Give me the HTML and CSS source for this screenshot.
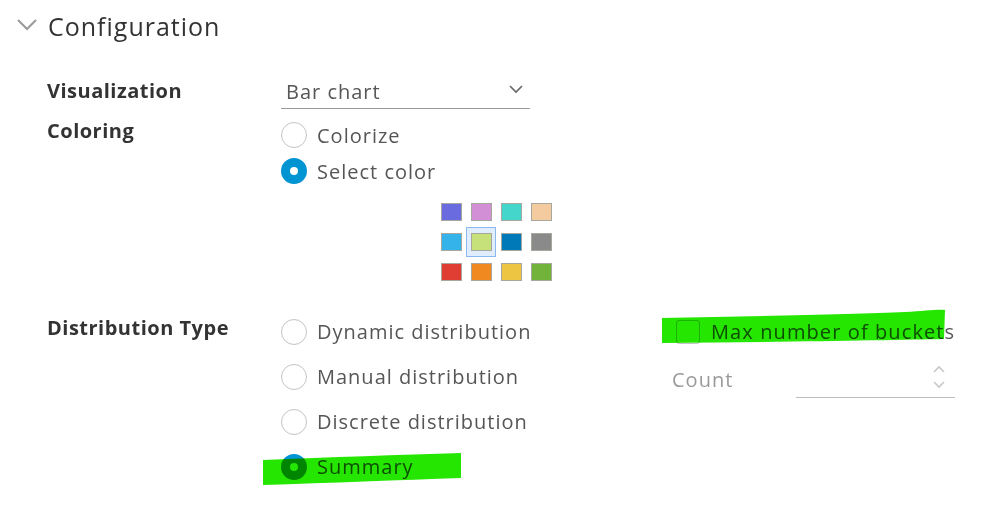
FILE: index.html
```html
<!DOCTYPE html>
<html lang="en">
<head>
    <meta charset="UTF-8">
    <title>Configuration</title>
    <link rel="stylesheet" href="styles.css">
</head>
<body>
    <div class="page">
        <div class="section-head">
            <svg class="caret" width="22" height="14" viewBox="0 0 22 14"><path d="M2 2 L11 11 L20 2" fill="none" stroke="#9a9a9a" stroke-width="2"/></svg>
            <h2>Configuration</h2>
        </div>

        <div class="form">
            <div class="row row-vis">
                <div class="label">Visualization</div>
                <div class="select">
                    <span>Bar chart</span>
                    <svg width="16" height="10" viewBox="0 0 16 10"><path d="M2 2 L8 8 L14 2" fill="none" stroke="#666" stroke-width="1.6"/></svg>
                </div>
            </div>

            <div class="row row-color">
                <div class="label">Coloring</div>
                <div class="control">
                    <div class="radio"><span class="dot"></span>Colorize</div>
                    <div class="radio"><span class="dot checked"></span>Select color</div>
                    <div class="swatches">
                        <div class="cell"><span class="sw" style="background:#6b6be0"></span></div>
                        <div class="cell"><span class="sw" style="background:#d38fd6"></span></div>
                        <div class="cell"><span class="sw" style="background:#45d6cb"></span></div>
                        <div class="cell"><span class="sw" style="background:#f3cb9e"></span></div>
                        <div class="cell"><span class="sw" style="background:#33b3ea"></span></div>
                        <div class="cell selected"><span class="sw" style="background:#c6e07a"></span></div>
                        <div class="cell"><span class="sw" style="background:#0079b8"></span></div>
                        <div class="cell"><span class="sw" style="background:#8a8a8a"></span></div>
                        <div class="cell"><span class="sw" style="background:#e03e33"></span></div>
                        <div class="cell"><span class="sw" style="background:#f08a20"></span></div>
                        <div class="cell"><span class="sw" style="background:#eec443"></span></div>
                        <div class="cell"><span class="sw" style="background:#72b33b"></span></div>
                    </div>
                </div>
            </div>

            <div class="row row-dist">
                <div class="label">Distribution Type</div>
                <div class="dist-options">
                    <div class="radio tall"><span class="dot"></span>Dynamic distribution</div>
                    <div class="radio tall"><span class="dot"></span>Manual distribution</div>
                    <div class="radio tall"><span class="dot"></span>Discrete distribution</div>
                    <div class="radio tall"><span class="dot checked"></span>Summary</div>
                </div>
                <div class="buckets">
                    <div class="check"><span class="box"></span>Max number of buckets</div>
                    <div class="count">
                        <span class="count-label">Count</span>
                        <div class="number">
                            <svg width="16" height="28" viewBox="0 0 16 28"><path d="M3 9 L8 4 L13 9 M3 19 L8 24 L13 19" fill="none" stroke="#c8c8c8" stroke-width="1.6"/></svg>
                        </div>
                    </div>
                </div>
            </div>
        </div>
    </div>

    <svg class="marker" width="981" height="507" viewBox="0 0 981 507">
        <path d="M662 318 C 760 316, 860 314, 905 312 C 925 311, 938 309, 945 310 L 944 339 C 900 340, 780 342, 662 343 Z" fill="#24e600"/>
        <path d="M263 460 C 330 457, 400 455, 461 453 L 461 478 C 400 480, 330 483, 263 485 Z" fill="#24e600"/>
    </svg>
</body>
</html>
```

FILE: styles.css
```css
body {
    margin: 0;
    font-family: "Open Sans", "Noto Sans", sans-serif;
    color: #565656;
    background: #fff;
}
.page {
    position: relative;
    padding-top: 1px;
}
.section-head {
    display: flex;
    align-items: center;
    height: 50px;
    padding-left: 16px;
}
.caret {
    margin-right: 10px;
    margin-top: -3px;
}
.section-head h2 {
    margin: 0;
    font-size: 25px;
    font-weight: 400;
    letter-spacing: 1px;
    color: #333;
}
.form {
    padding-left: 47px;
    margin-top: 23px;
}
.row {
    display: flex;
}
.label {
    width: 234px;
    flex: none;
    font-size: 20px;
    font-weight: 700;
    letter-spacing: 0.5px;
    color: #333;
}
.row-vis .label {
    line-height: 34px;
}
.select {
    width: 244px;
    height: 34px;
    padding-left: 5px;
    border-bottom: 1px solid #9a9a9a;
    display: flex;
    align-items: center;
    justify-content: space-between;
    font-size: 20px;
    letter-spacing: 1px;
    color: #565656;
}
.select svg {
    margin-right: 6px;
    margin-top: -4px;
}
.row-color {
    margin-top: 8px;
}
.row-color .label {
    padding-top: 2px;
    line-height: 24px;
}
.radio {
    display: flex;
    align-items: center;
    height: 36px;
    font-size: 20px;
    letter-spacing: 1px;
}
.radio.tall {
    height: 45px;
}
.dot {
    width: 24px;
    height: 24px;
    border: 1px solid #c4c4c4;
    border-radius: 50%;
    margin-right: 10px;
    box-sizing: content-box;
    flex: none;
}
.dot.checked {
    border: 9px solid #0094d3;
    width: 8px;
    height: 8px;
    background: #fff;
}
.swatches {
    display: grid;
    grid-template-columns: repeat(4, 30px);
    grid-auto-rows: 30px;
    margin-left: 155px;
    margin-top: 8px;
}
.cell {
    display: flex;
    align-items: center;
    justify-content: center;
    box-sizing: border-box;
}
.cell.selected {
    background: #dfedfd;
    border: 1px solid #8db7ef;
}
.sw {
    width: 19px;
    height: 16px;
    border: 1px solid #a8a79f;
}
.row-dist {
    margin-top: 22px;
}
.row-dist .label {
    padding-top: 7px;
    line-height: 24px;
}
.dist-options {
    width: 391px;
    flex: none;
}
.buckets {
    display: flex;
    flex-direction: column;
}
.check {
    display: flex;
    align-items: center;
    height: 45px;
    font-size: 20px;
    letter-spacing: 1.1px;
    margin-left: 4px;
}
.box {
    width: 22px;
    height: 22px;
    border: 1px solid #c4c4c4;
    border-radius: 3px;
    margin-right: 11px;
}
.count {
    display: flex;
    align-items: flex-start;
}
.count-label {
    font-size: 20px;
    line-height: 24px;
    letter-spacing: 1px;
    color: #9a9a9a;
    width: 124px;
    margin-top: 14px;
}
.number {
    width: 159px;
    height: 34px;
    margin-top: 9px;
    border-bottom: 1px solid #bdbdbd;
    display: flex;
    justify-content: flex-end;
    align-items: flex-start;
}
.number svg {
    margin-right: 8px;
}
.marker {
    position: absolute;
    left: 0;
    top: 0;
    mix-blend-mode: multiply;
    pointer-events: none;
}
```
